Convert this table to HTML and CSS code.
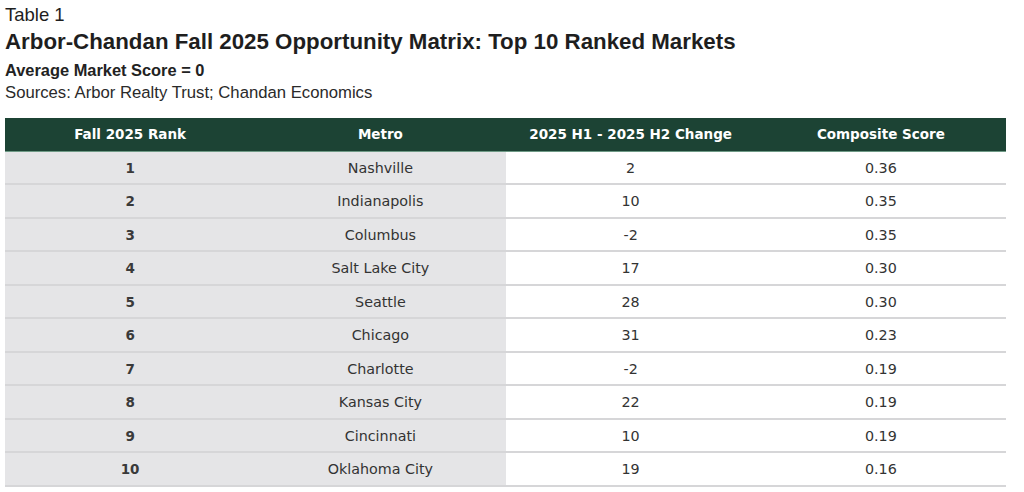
FILE: index.html
```html
<!DOCTYPE html>
<html>
<head>
<meta charset="utf-8">
<link rel="stylesheet" href="styles.css">
</head>
<body>
<div class="page">
  <div class="caption">
    <div class="label">Table 1</div>
    <h1 class="title">Arbor-Chandan Fall 2025 Opportunity Matrix: Top 10 Ranked Markets</h1>
    <div class="sub">Average Market Score = 0</div>
    <div class="src">Sources: Arbor Realty Trust; Chandan Economics</div>
  </div>
  <table class="matrix">
    <thead>
      <tr><th>Fall 2025 Rank</th><th>Metro</th><th>2025 H1 - 2025 H2 Change</th><th>Composite Score</th></tr>
    </thead>
    <tbody>
      <tr><td class="rank">1</td><td class="metro">Nashville</td><td>2</td><td>0.36</td></tr>
      <tr><td class="rank">2</td><td class="metro">Indianapolis</td><td>10</td><td>0.35</td></tr>
      <tr><td class="rank">3</td><td class="metro">Columbus</td><td>-2</td><td>0.35</td></tr>
      <tr><td class="rank">4</td><td class="metro">Salt Lake City</td><td>17</td><td>0.30</td></tr>
      <tr><td class="rank">5</td><td class="metro">Seattle</td><td>28</td><td>0.30</td></tr>
      <tr><td class="rank">6</td><td class="metro">Chicago</td><td>31</td><td>0.23</td></tr>
      <tr><td class="rank">7</td><td class="metro">Charlotte</td><td>-2</td><td>0.19</td></tr>
      <tr><td class="rank">8</td><td class="metro">Kansas City</td><td>22</td><td>0.19</td></tr>
      <tr><td class="rank">9</td><td class="metro">Cincinnati</td><td>10</td><td>0.19</td></tr>
      <tr><td class="rank">10</td><td class="metro">Oklahoma City</td><td>19</td><td>0.16</td></tr>
    </tbody>
  </table>
</div>
</body>
</html>
```
FILE: styles.css
```css
html, body {
  margin: 0;
  padding: 0;
  background: #ffffff;
}
.page {
  padding: 4px 18px 0 5px;
}
.caption {
  font-family: "Liberation Sans", Arial, sans-serif;
  color: #1e1e1e;
}
.label {
  font-size: 18.5px;
  line-height: 22px;
}
.title {
  margin: 0;
  font-size: 22.3px;
  line-height: 32.5px;
  font-weight: bold;
}
.sub {
  font-size: 16.4px;
  line-height: 22.6px;
  font-weight: bold;
  color: #222;
}
.src {
  font-size: 16.7px;
  line-height: 23.2px;
  color: #2a2a2a;
}
.matrix {
  margin-top: 13.7px;
  width: 1001px;
  border-collapse: collapse;
  table-layout: fixed;
  font-family: "DejaVu Sans", sans-serif;
  font-size: 14.3px;
}
.matrix th {
  background: #1c4334;
  color: #ffffff;
  font-weight: bold;
  font-size: 13.5px;
  height: 33px;
  padding: 0;
  text-align: center;
  border-bottom: 1px solid #6f9a86;
}
.matrix td {
  height: 31.5px;
  padding: 0;
  text-align: center;
  color: #333;
  border-bottom: 2px solid #d6d6d8;
  background: #fff;
}
.matrix td.rank,
.matrix td.metro {
  background: #e5e5e7;
}
.matrix td.rank {
  font-weight: bold;
  font-size: 13.5px;
  color: #3a3a3a;
}
```
